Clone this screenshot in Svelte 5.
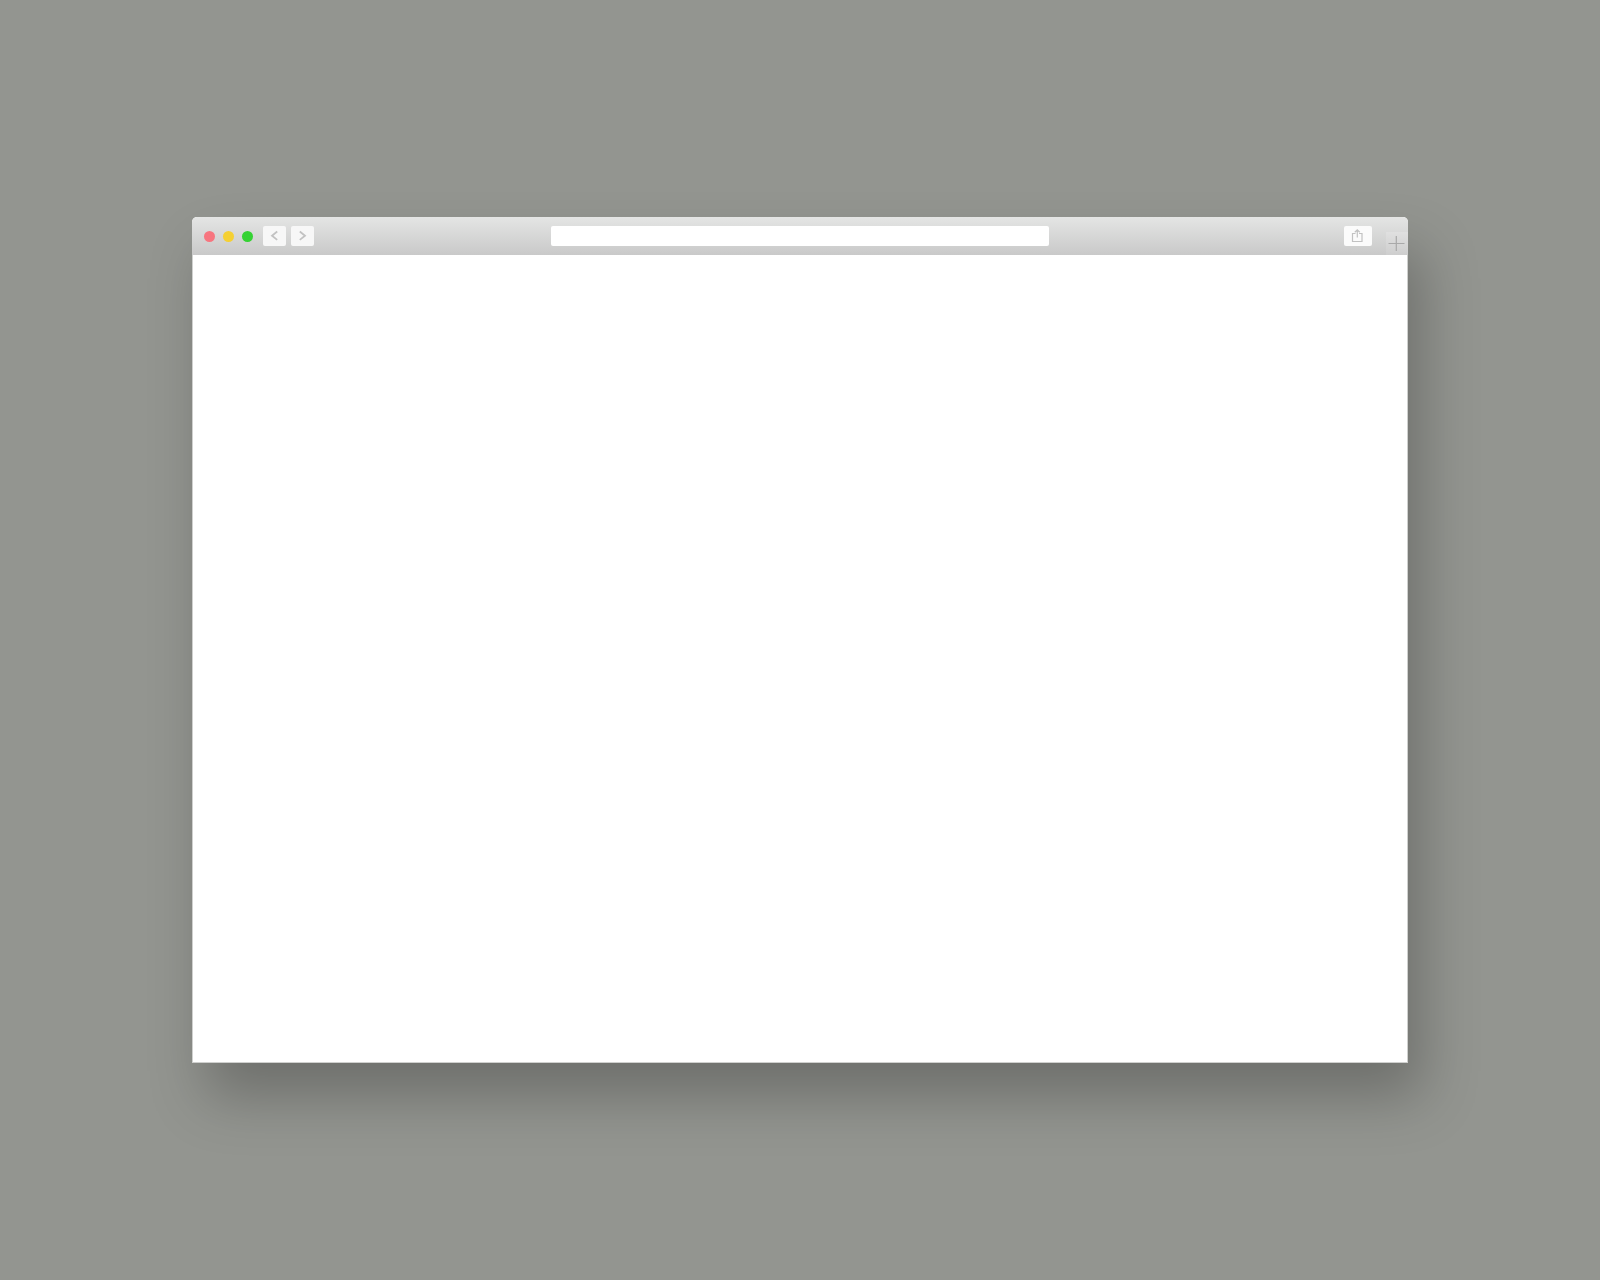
<script>
  const lights = [
    { name: 'close', label: 'Close window' },
    { name: 'minimize', label: 'Minimize window' },
    { name: 'zoom', label: 'Zoom window' }
  ];

  let address = $state('');
</script>

<main class="desktop">
  <section class="window" aria-label="Browser window">
    <header class="toolbar">
      <div class="toolbar__left">
        <div class="lights">
          {#each lights as light}
            <button class="light light--{light.name}" aria-label={light.label}></button>
          {/each}
        </div>

        <nav class="history" aria-label="History">
          <button class="tool" aria-label="Back">
            <svg width="23" height="20" viewBox="0 0 23 20" aria-hidden="true">
              <path d="M14.2 5.5 9 9.7l5.2 4.2" />
            </svg>
          </button>
          <button class="tool" aria-label="Forward">
            <svg width="23" height="20" viewBox="0 0 23 20" aria-hidden="true">
              <path d="m8.8 5.5 5.2 4.2-5.2 4.2" />
            </svg>
          </button>
        </nav>
      </div>

      <input class="address" type="text" aria-label="Address" bind:value={address} />

      <div class="toolbar__right">
        <button class="tool tool--share" aria-label="Share">
          <svg width="28" height="20" viewBox="0 0 28 20" aria-hidden="true">
            <path d="M11.5 7.5h-3v8h9.5v-8h-3M13.3 11.5V4M10.8 6.2l2.5-2.4 2.5 2.4" />
          </svg>
        </button>
        <button class="new-tab" aria-label="New tab">
          <svg width="22" height="23" viewBox="0 0 22 23" aria-hidden="true">
            <path d="M2.5 11.5h16M10.3 4v15" />
          </svg>
        </button>
      </div>
    </header>

    <div class="page"></div>
  </section>
</main>

<style>
  :global(body) {
    margin: 0;
    background: #939590;
    font-family: "Liberation Sans", sans-serif;
  }

  .desktop {
    min-height: 100vh;
    display: flex;
    align-items: center;
    justify-content: center;
  }

  .window {
    display: flex;
    flex-direction: column;
    width: 76%;
    aspect-ratio: 1216 / 846;
    border-radius: 5px 5px 0 0;
    background: #fff;
    box-shadow: 14px 34px 56px rgba(0, 0, 0, 0.25);
  }

  .toolbar {
    display: grid;
    grid-template-columns: 1fr 41% 1fr;
    align-items: center;
    height: 38px;
    border-radius: 5px 5px 0 0;
    background: linear-gradient(#e4e5e4, #c9c9c9);
    overflow: hidden;
  }

  .toolbar__left {
    display: flex;
    align-items: center;
    gap: 10px;
    padding-left: 12px;
  }

  .toolbar__right {
    display: flex;
    align-items: center;
    justify-content: flex-end;
    gap: 14px;
    height: 100%;
  }

  .lights { display: flex; gap: 8px; }
  .history { display: flex; gap: 5px; }

  button {
    padding: 0;
    border: 0;
    cursor: pointer;
  }

  .light {
    width: 11px;
    height: 11px;
    border-radius: 50%;
  }
  .light--close    { background: #f7757f; }
  .light--minimize { background: #f5d033; }
  .light--zoom     { background: #35d233; }

  svg {
    display: block;
    fill: none;
    stroke: #c2c2c2;
  }

  .tool {
    border-radius: 2px;
    background: #f7f7f7;
  }
  .tool svg { stroke-width: 1.8; }

  .tool--share { background: #fbfbfb; }
  .tool--share svg { stroke-width: 1.2; }

  .address {
    box-sizing: border-box;
    width: 100%;
    height: 20px;
    padding: 0 8px;
    border: 0;
    border-radius: 2px;
    background: #fff;
    font: inherit;
    font-size: 12px;
  }

  .new-tab {
    align-self: flex-end;
    background: linear-gradient(#e0e0e0, #cecece);
  }
  .new-tab svg { stroke: #a9a9a9; stroke-width: 1.2; }

  .page {
    flex: 1;
    border: 1px solid #cfd0ce;
    border-top: 0;
  }
</style>
